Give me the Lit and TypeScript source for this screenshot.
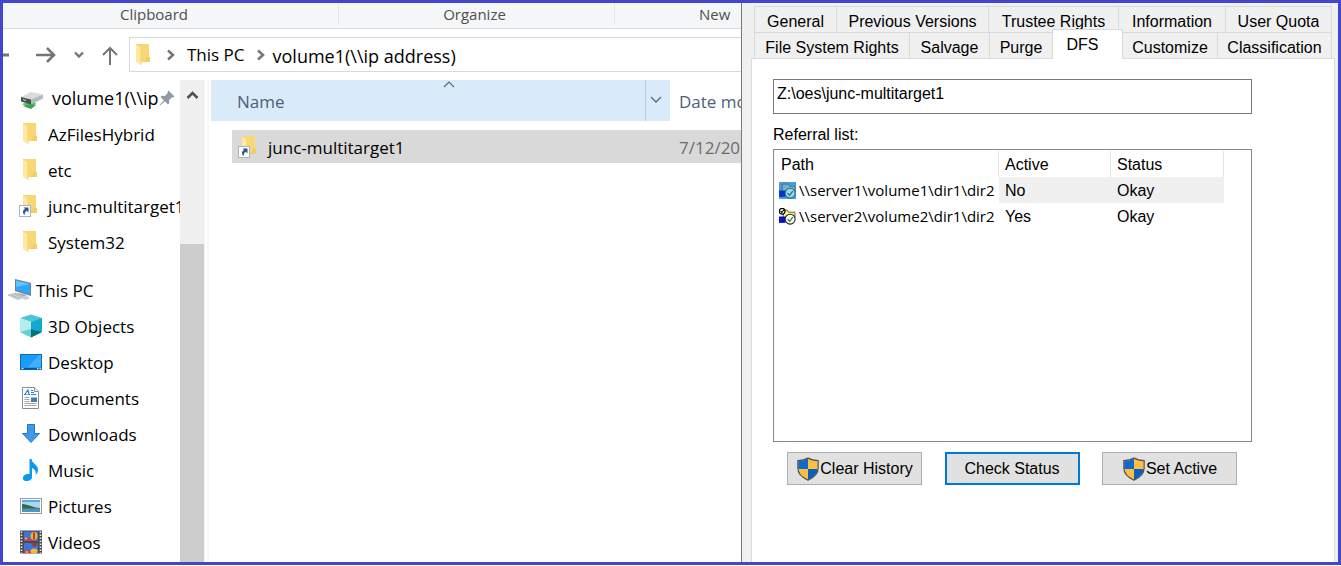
import { LitElement, html, svg, css, nothing, TemplateResult } from "lit";
import { customElement, property, state } from "lit/decorators.js";
import { classMap } from "lit/directives/class-map.js";

const folder = svg`
  <path d="M4 1H17V19H8z" fill="#f8d775"/>
  <path d="M15 14h3v5h-6z" fill="#f3cd65"/>
  <path d="M4 1l5 3v18l-5-3z" fill="#ffe9a2"/>
  <path d="M4 1l5 3v18" fill="none" stroke="#f1cd6c" stroke-width=".7"/>`;

const arrowBadge = svg`
  <rect x="0.5" y="11.500" width="11" height="11" fill="#fff" stroke="#a9b4bf"/>
  <path d="M4.500 13.500h5v5l-1.700-1.700c-1.700 1-2.200 2-2 4.200-2.600-1.500-2.300-4.500.3-5.900z" fill="#24569c"/>`;

const icons: Record<string, TemplateResult> = {
  folder: html`<svg viewBox="0 0 24 24">${folder}</svg>`,
  junction: html`<svg viewBox="0 0 24 24">${folder}${arrowBadge}</svg>`,
  drive: html`<svg viewBox="0 0 24 24">
    <path d="M3 18l12-4 2 4-7 4z" fill="#4fc36a"/>
    <path d="M4 20l8-2 5 1-5 4z" fill="#35a84f"/>
    <path d="M2 11l10-5 12 2.500-12 5z" fill="#d9dcde"/>
    <path d="M2 11l10 2.500v5L2 15.500z" fill="#4b4f52"/>
    <path d="M12 13.500l12-5v4l-12 6z" fill="#b5babd"/>
    <path d="M4 13.500l3 1" stroke="#a8e0b0" stroke-width="1.200"/></svg>`,
  pc: html`<svg viewBox="0 0 24 24">
    <path d="M7 1l16 4v13L7 13z" fill="#6a7f90"/>
    <path d="M8 2.500l14 3.500v10.500L8 12z" fill="#2ea7f7"/>
    <path d="M8 2.500l14 3.500L8 9z" fill="#62c1ff"/>
    <path d="M9 15l7 1 3 2-7 1z" fill="#aab2b8"/>
    <path d="M0 17l8-2 9 4-7 2.500z" fill="#d6dade" stroke="#9da5ab" stroke-width=".6"/>
    <path d="M3 17l8 3M6 16l8 3" stroke="#8f989f" stroke-width=".6"/>
    <path d="M14 20l5-2 3 2-4 2z" fill="#c9ced2"/></svg>`,
  cube: html`<svg viewBox="0 0 24 24">
    <path d="M1 4l11-3.500L23 4l-11 4z" fill="#4cc6d6"/>
    <path d="M1 4l11 4v15.500L1 18z" fill="#b5ecec"/>
    <path d="M23 4L12 8v15.500L23 18z" fill="#14b4d2"/>
    <path d="M1 18l11-3v8.500z" fill="#63cfd4"/>
    <path d="M12 15l11 3-11 5.500z" fill="#04707f"/>
    <path d="M12 15V8l11-4v14z" fill="#12a9d0"/></svg>`,
  desktop: html`<svg viewBox="0 0 24 24">
    <rect x="1.500" y="4.500" width="21" height="15" fill="#1b9bf5" stroke="#0b6db5"/>
    <path d="M9 17L20 5h2v12z" fill="#3fb0ff"/>
    <path d="M2 18h20v1.500H2z" fill="#07579a"/>
    <path d="M2.500 18.700h2M18 18.700h1.500M20.500 18.700H22" stroke="#fff"/></svg>`,
  document: html`<svg viewBox="0 0 24 24">
    <path d="M3.500 1.500h12l4 4v17h-16z" fill="#fff" stroke="#8c8c8c"/>
    <path d="M15.500 1.500v4h4" fill="#eee" stroke="#8c8c8c"/>
    <path d="M5 8.500h2.500M8.500 8.500H11M6 8l3-4 1 4.500M12 4.500h2M12 6.500h3M12 8.500h5" stroke="#2787c9" stroke-width="1.200" fill="none"/>
    <path d="M5.500 11.500h5M5.500 13.500h5M5.500 15.500h5M5.500 17.500h12M5.500 19.500h12" stroke="#a3a8ad"/>
    <rect x="12" y="11.500" width="6" height="4.500" fill="#3d7fae"/></svg>`,
  download: html`<svg viewBox="0 0 24 24">
    <path d="M8.500 2.500h7v9h5L12 20.500 3.500 11.500h5z" fill="#3d9be9" stroke="#2079c6"/></svg>`,
  music: html`<svg viewBox="0 0 24 24">
    <path d="M10.500 1h2c.5 4.500 6.500 6 6.500 10.500 0 2.500-1 4-2.500 5.500 1-4-1-6-3.500-7v9c0 2.500-2.500 4-5.500 4S4 21.500 4 19.500s3-4 5.500-3.500l1 .3z" fill="#0a99f2"/></svg>`,
  picture: html`<svg viewBox="0 0 24 24">
    <rect x="1.500" y="4.500" width="21" height="15" fill="#fff" stroke="#9b9b9b"/>
    <rect x="3" y="6" width="18" height="12" fill="#a9d8f6"/>
    <path d="M3 6h18v2H3z" fill="#5aa9df"/>
    <path d="M3 10c6 0 12 4 18 4v1H3z" fill="#37694d"/>
    <path d="M3 14.500h18V18H3z" fill="#4f96bd"/></svg>`,
  video: html`<svg viewBox="0 0 24 24">
    <rect x="1" y="0.500" width="22" height="23" fill="#4a4c50"/>
    <path d="M2.500 1.500v22M21.500 1.500v22" stroke="#e8e8e8" stroke-width="1.600" stroke-dasharray="1.500 1.500"/>
    <path d="M5 1.500h14v9.500H5zM5 13h14v10H5z" fill="#3c74d8"/>
    <path d="M5 10l3-3 3 2 3 0v2H5zM5 21l4-1 3 1v2H5z" fill="#d33b4d"/>
    <path d="M6 8.500h2M7 22h2" stroke="#f0d040" stroke-width="1.500"/>
    <ellipse cx="15" cy="6" rx="3.500" ry="4" fill="#e9b52c"/>
    <path d="M14 2.500h2v7h-2z" fill="#c8362c"/>
    <path d="M12 13h7l-3 4h-1z" fill="#b3302c"/>
    <ellipse cx="15" cy="21" rx="3.500" ry="2.500" fill="#f0bd34"/></svg>`,
  shield: html`<svg viewBox="0 0 24 26">
    <path d="M12 1.500C9 3.500 5 4.500 1.500 4.500V13H12z" fill="#0a6cce"/>
    <path d="M12 1.500c3 2 7 3 10.500 3V13H12z" fill="#ffbe3d"/>
    <path d="M1.500 13c.5 5 5 9 10.500 11.500V13z" fill="#ffbe3d"/>
    <path d="M22.500 13c-.5 5-5 9-10.500 11.500V13z" fill="#0a5fc4"/>
    <path d="M12 1.200C9 3.200 5 4 1 4v8c0 6 5 10.500 11 13 6-2.500 11-7 11-13V4c-4 0-8-.8-11-2.800z" fill="none" stroke="#4d5052" stroke-width="1.300"/></svg>`,
  pin: html`<svg viewBox="0 0 16 16">
    <path d="M9.500.5L15.500 6.500l-1.500 1-1-.3-3 3 .2 3L9 14.500 5.800 11.200 1 15.500.5 15 4.800 10.200 1.500 7l1.300-1.200 3 .2 3-3-.3-1z" fill="#8b9aa6"/></svg>`,
  back: html`<svg viewBox="0 0 8 24"><path d="M0 12h6" stroke="#757575" stroke-width="3"/></svg>`,
  forward: html`<svg viewBox="0 0 20 24"><path d="M0 12h18M11 5l7 7-7 7" fill="none" stroke="#757575" stroke-width="2.500"/></svg>`,
  up: html`<svg viewBox="0 0 16 24"><path d="M8 22V5M1 12l7-7 7 7" fill="none" stroke="#757575" stroke-width="2"/></svg>`,
  recent: html`<svg viewBox="0 0 10 24"><path d="M1 9.500l4 4 4-4" fill="none" stroke="#757575" stroke-width="2.400"/></svg>`,
  crumb: html`<svg viewBox="0 0 8 24"><path d="M1 7.500l5 4.500-5 4.500" fill="none" stroke="#757575" stroke-width="2.500"/></svg>`,
  scrollUp: html`<svg viewBox="0 0 12 10"><path d="M1 8l5-5 5 5" fill="none" stroke="#505050" stroke-width="2.500"/></svg>`,
  sort: html`<svg viewBox="0 0 12 8"><path d="M1 7l5-5 5 5" fill="none" stroke="#5b6670" stroke-width="1.200"/></svg>`,
  chevron: html`<svg viewBox="0 0 12 8"><path d="M1 1l5 5 5-5" fill="none" stroke="#5b6670" stroke-width="1.300"/></svg>`,
  targetOff: html`<svg viewBox="0 0 16 16">
    <rect width="16" height="16" fill="#4a9be0"/>
    <path d="M3 2h6l1 2h5v5H3z" fill="#74b8b4" stroke="#2c6c9d" stroke-width=".8"/>
    <rect x="0" y="8" width="6" height="6" fill="#0a35c8"/>
    <circle cx="10.500" cy="10.500" r="4.700" fill="#9ed4f2" stroke="#2b6792"/>
    <path d="M8 10.500l2 2 3-4" fill="none" stroke="#197a62" stroke-width="1.200"/></svg>`,
  targetOn: html`<svg viewBox="0 0 16 16">
    <path d="M4 2h4l1 2h6v5H4z" fill="#fff48a" stroke="#4b4b1b" stroke-width=".8"/>
    <rect x="0" y="8" width="6" height="6" fill="#0a12c8"/>
    <circle cx="3" cy="3" r="2.700" fill="#fff" stroke="#000" stroke-width="1.200"/>
    <path d="M1.500 3l1.200 1.200L4.700 1.500" fill="none" stroke="#000"/>
    <circle cx="10.500" cy="10.500" r="4.700" fill="#fff" stroke="#222"/>
    <path d="M8 10.500l2 2 3-4" fill="none" stroke="#1b8a2e" stroke-width="1.200"/></svg>`,
};

const reset = css`
  *, *::before, *::after { box-sizing: border-box; }
  svg { display: block; width: 100%; height: 100%; }
  button { font: inherit; color: inherit; background: none; border: 0; margin: 0; padding: 0; }
  a { color: inherit; text-decoration: none; }
  table { border-collapse: separate; border-spacing: 0; table-layout: fixed; }
  th, td { padding: 0; text-align: left; font-weight: 400; white-space: nowrap; }
`;

interface TreeItem {
  icon: string;
  label: string;
  kind?: "root" | "pinned";
}

const quickAccess: TreeItem[] = [
  { icon: "drive", label: "volume1(\\\\ip", kind: "pinned" },
  { icon: "folder", label: "AzFilesHybrid" },
  { icon: "folder", label: "etc" },
  { icon: "junction", label: "junc-multitarget1" },
  { icon: "folder", label: "System32" },
];

const thisPc: TreeItem[] = [
  { icon: "pc", label: "This PC", kind: "root" },
  { icon: "cube", label: "3D Objects" },
  { icon: "desktop", label: "Desktop" },
  { icon: "document", label: "Documents" },
  { icon: "download", label: "Downloads" },
  { icon: "music", label: "Music" },
  { icon: "picture", label: "Pictures" },
  { icon: "video", label: "Videos" },
];

@customElement("file-explorer")
export class FileExplorer extends LitElement {
  static styles = [reset, css`
    :host {
      display: flex; flex-direction: column; min-width: 0; overflow: hidden;
      background: #fff; color: #000;
      font: 17px/24px "Open Sans", "Noto Sans", sans-serif;
    }
    .ribbon {
      display: grid; grid-template-columns: 336px 276px minmax(0, 1fr);
      height: 26px; padding-bottom: 4px;
      background: #f5f6f7; border-bottom: 1px solid #dadbdc;
      color: #505050; font-size: 15px; line-height: 22px; text-align: center;
    }
    .group { border-right: 1px solid #e2e3e4; }
    .clipboard { padding-right: 33px; }
    .organize { padding-right: 4px; }
    .new { border: 0; padding-left: 84px; text-align: left; }
    .toolbar { display: flex; align-items: center; height: 51px; }
    .nav { display: flex; align-items: center; width: 126px; height: 24px; }
    .nav button { height: 24px; flex: none; }
    .back { width: 8px; margin-right: 25px; }
    .forward { width: 20px; margin-right: 18px; }
    .recent { width: 10px; margin-right: 18px; }
    .up { width: 16px; }
    .address {
      flex: 1; min-width: 0; height: 35px; display: flex; align-items: center;
      border: 1px solid #d9d9d9; border-right: 0; padding-left: 2px; white-space: nowrap;
    }
    .address .icon { margin-right: 11px; }
    .crumb { width: 8px; height: 24px; flex: none; }
    .address a { margin: 0 12px; }
    .address .current { margin-left: 8px; padding-top: 2px; font-size: 18px; }
    .body { flex: 1; display: flex; min-height: 0; }
    .tree { width: 177px; overflow: hidden; }
    .tree ul { list-style: none; margin: 0 0 12px; padding: 0; }
    .tree ul:last-child { margin: 0; }
    .item {
      position: relative; display: flex; align-items: center; gap: 5px;
      height: 36px; padding-left: 16px; white-space: nowrap;
    }
    .item .label { padding-top: 2px; }
    .item.root { padding-left: 5px; gap: 4px; }
    .item.pinned { gap: 9px; font-size: 18px; }
    .item.pinned .label { padding: 0; }
    .icon { width: 24px; height: 24px; flex: none; }
    .pin { position: absolute; right: 5px; top: 10px; width: 16px; height: 16px; }
    .scrollbar { width: 25px; background: #f0f0f0; display: flex; flex-direction: column; }
    .scrollbar button { height: 164px; padding: 10px 6px 0; display: flex; align-items: flex-start; }
    .scrollbar svg { height: 10px; }
    .thumb { flex: 1; width: 24px; background: #cdcdcd; }
    .files { flex: 1; min-width: 0; margin-left: 2px; padding-left: 2px; border-left: 2px solid #f7f7f7; overflow: hidden; }
    .files table { width: 100%; }
    .name-col { width: 459px; }
    th { height: 41px; color: #4c607a; overflow: hidden; }
    .head { position: relative; display: flex; height: 41px; background: #d9ebf9; }
    .head > .title { flex: 1; text-align: left; padding: 2px 0 0 26px; }
    .sort { position: absolute; left: 232px; top: 0; width: 12px; height: 8px; }
    .filter { width: 25px; padding: 16px 8px 17px 4px; border-left: 1px solid #b9cfe0; }
    .date { padding: 2px 0 0 9px; overflow: hidden; }
    td { padding-top: 9px; overflow: hidden; }
    .cell { display: flex; align-items: center; height: 33px; background: #d9d9d9; overflow: hidden; }
    .cell.name { margin-left: 21px; padding-left: 6px; gap: 6px; }
    .cell.when { padding: 2px 0 0 9px; color: #6d6d6d; }
    .cell.name .label { padding-top: 2px; }
  `];

  private item(entry: TreeItem) {
    const classes = { item: true, root: entry.kind === "root", pinned: entry.kind === "pinned" };
    return html`<li><a href="#" class=${classMap(classes)}>
      <span class="icon">${icons[entry.icon]}</span><span class="label">${entry.label}</span>
      ${entry.kind === "pinned" ? html`<span class="pin">${icons.pin}</span>` : nothing}
    </a></li>`;
  }

  render() {
    return html`
      <div class="ribbon">
        <div class="group clipboard">Clipboard</div>
        <div class="group organize">Organize</div>
        <div class="group new">New</div>
      </div>
      <div class="toolbar">
        <div class="nav">
          <button class="back" aria-label="Back">${icons.back}</button>
          <button class="forward" aria-label="Forward">${icons.forward}</button>
          <button class="recent" aria-label="Recent locations">${icons.recent}</button>
          <button class="up" aria-label="Up">${icons.up}</button>
        </div>
        <nav class="address" aria-label="Address">
          <span class="icon">${icons.folder}</span>
          <span class="crumb">${icons.crumb}</span><a href="#">This PC</a>
          <span class="crumb">${icons.crumb}</span><a href="#" class="current">volume1(\\\\ip address)</a>
        </nav>
      </div>
      <div class="body">
        <nav class="tree" aria-label="Folders">
          <ul>${quickAccess.map((entry) => this.item(entry))}</ul>
          <ul>${thisPc.map((entry) => this.item(entry))}</ul>
        </nav>
        <div class="scrollbar">
          <button aria-label="Scroll up">${icons.scrollUp}</button>
          <div class="thumb"></div>
        </div>
        <div class="files">
          <table>
            <colgroup><col class="name-col" /><col /></colgroup>
            <thead><tr>
              <th><div class="head">
                <button class="title">Name</button>
                <span class="sort">${icons.sort}</span>
                <button class="filter" aria-label="Filter by name">${icons.chevron}</button>
              </div></th>
              <th><div class="date">Date modified</div></th>
            </tr></thead>
            <tbody><tr>
              <td><div class="cell name"><span class="icon">${icons.junction}</span><span class="label">junc-multitarget1</span></div></td>
              <td><div class="cell when">7/12/2021</div></td>
            </tr></tbody>
          </table>
        </div>
      </div>`;
  }
}

const backTabs = ["General", "Previous Versions", "Trustee Rights", "Information", "User Quota"];
const frontTabs = ["File System Rights", "Salvage", "Purge", "DFS", "Customize", "Classification"];

const referrals = [
  { icon: "targetOff", path: "\\\\server1\\volume1\\dir1\\dir2", active: "No", status: "Okay", selected: true },
  { icon: "targetOn", path: "\\\\server2\\volume2\\dir1\\dir2", active: "Yes", status: "Okay", selected: false },
];

@customElement("properties-dialog")
export class PropertiesDialog extends LitElement {
  @property() path = "Z:\\oes\\junc-multitarget1";
  @state() private selectedTab = "DFS";

  static styles = [reset, css`
    :host {
      display: flex; flex-direction: column; padding: 3px 3px 0 9px;
      background: #f0f0f0; border-left: 1px solid #7a7a7a; color: #000;
      font: 16px/18px "Liberation Sans", Arial, sans-serif;
    }
    .tabs { display: grid; height: 26px; margin: 0 3px; border-right: 1px solid #d9d9d9; }
    .back-row { grid-template-columns: 82fr 152fr 130fr 107fr 106fr; }
    .front-row { grid-template-columns: 155fr 80fr 63fr 70fr 95fr 114fr; }
    .tab {
      display: flex; justify-content: center; align-items: flex-start; min-width: 0;
      padding-top: 6px; border: 1px solid #d9d9d9; border-width: 1px 0 0 1px; white-space: nowrap;
    }
    .tab span { height: 17px; overflow: hidden; }
    .tab.selected {
      z-index: 1; margin: -3px -1px -1px 0; padding: 6px 10px 0 0;
      background: #fff; border-right-width: 1px;
    }
    .page { flex: 1; background: #fff; border: 1px solid #dcdcdc; border-bottom: 0; padding: 20px 82px 0 21px; }
    .path {
      display: block; width: 100%; height: 35px; margin: 0 0 12px; padding: 0 3px 6px;
      border: 1px solid #7a7a7a; border-radius: 0; background: #fff; color: inherit; font: inherit; outline: 0;
    }
    .caption { display: block; height: 23px; }
    .list { height: 293px; border: 1px solid #828790; padding-top: 1px; }
    .list table { width: 450px; }
    .path-col { width: 225px; }
    .active-col { width: 112px; }
    th { height: 26px; border-right: 1px solid #e5e5e5; padding: 2px 0 0 6px; }
    th:first-child { padding-left: 7px; }
    td { height: 26px; padding: 2px 0 0 6px; }
    td:first-child { padding: 0 0 0 5px; }
    .selected td { background: #f0f0f0; }
    .selected td:first-child { background: #fff; }
    .target {
      display: flex; align-items: center; gap: 3px;
      font: 15px/24px "Open Sans", "Noto Sans", sans-serif;
    }
    .target .glyph { width: 17px; height: 17px; flex: none; }
    .actions { display: flex; justify-content: space-between; padding: 10px 15px 0 14px; }
    .action {
      display: flex; align-items: center; justify-content: center;
      width: 135px; height: 33px; background: #e1e1e1; border: 1px solid #adadad; white-space: nowrap;
    }
    .action.default { border: 2px solid #0078d7; }
    .shield { width: 24px; height: 24px; }
  `];

  private tab(label: string) {
    const selected = label === this.selectedTab;
    return html`<button role="tab" aria-selected=${selected ? "true" : "false"}
      class=${classMap({ tab: true, selected })}><span>${label}</span></button>`;
  }

  render() {
    return html`
      <div class="tabs back-row" role="tablist">${backTabs.map((label) => this.tab(label))}</div>
      <div class="tabs front-row" role="tablist">${frontTabs.map((label) => this.tab(label))}</div>
      <div class="page" role="tabpanel">
        <input class="path" type="text" aria-label="Path" .value=${this.path} />
        <span class="caption" id="referrals">Referral list:</span>
        <div class="list">
          <table aria-labelledby="referrals">
            <colgroup><col class="path-col" /><col class="active-col" /><col /></colgroup>
            <thead><tr><th>Path</th><th>Active</th><th>Status</th></tr></thead>
            <tbody>${referrals.map((row) => html`
              <tr class=${classMap({ selected: row.selected })}>
                <td><div class="target"><span class="glyph">${icons[row.icon]}</span><span>${row.path}</span></div></td>
                <td>${row.active}</td>
                <td>${row.status}</td>
              </tr>`)}
            </tbody>
          </table>
        </div>
        <div class="actions">
          <button class="action"><span class="shield">${icons.shield}</span>Clear History</button>
          <button class="action default">Check Status</button>
          <button class="action"><span class="shield">${icons.shield}</span>Set Active</button>
        </div>
      </div>`;
  }
}

@customElement("app-root")
export class AppRoot extends LitElement {
  static styles = css`
    :host { display: block; padding-bottom: 1px; background: #fff; }
    .frame {
      box-sizing: border-box; display: grid; grid-template-columns: minmax(0, 738fr) minmax(0, 597fr);
      min-height: calc(100vh - 1px); border: 3px solid #4147cc;
    }
  `;

  render() {
    return html`<div class="frame">
      <file-explorer></file-explorer>
      <properties-dialog></properties-dialog>
    </div>`;
  }
}
